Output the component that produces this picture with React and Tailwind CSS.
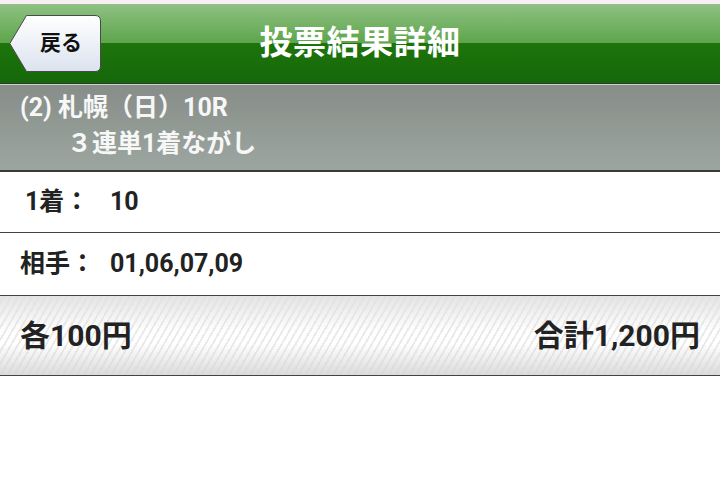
export default function App() {
  const font = "font-['Roboto','Noto_Sans_CJK_JP',sans-serif]";
  return (
    <div className={`w-[720px] h-[501px] bg-white ${font} overflow-hidden`}>
      <div className="h-[4px] bg-[#f8eff4]" />
      {/* Header */}
      <div className="relative h-[80px] bg-[linear-gradient(to_bottom,#8fc183_0%,#5ea54c_49%,#1d740b_50%,#15680a_100%)] border-b border-[#2d3b28] flex items-center justify-center">
        <button className="absolute left-[9px] top-[11px] w-[92px] h-[57px] flex items-center justify-center">
          <svg className="absolute inset-0" width="92" height="57" viewBox="0 0 92 57">
            <defs>
              <linearGradient id="bk" x1="0" y1="0" x2="0" y2="1">
                <stop offset="0" stopColor="#ffffff" />
                <stop offset="1" stopColor="#dbe3ee" />
              </linearGradient>
            </defs>
            <path d="M0.8,28.5 L17.5,0.5 H86 Q91.5,0.5 91.5,6 V51 Q91.5,56.5 86,56.5 H17.5 Z" fill="url(#bk)" stroke="#4a4a4a" strokeWidth="1" />
          </svg>
          <span className="relative pl-[12px] text-[21px] font-bold text-[#111] leading-none">戻る</span>
        </button>
        <h1 className="text-[33px] font-bold text-white leading-none tracking-[0.5px] mt-[-2px]">投票結果詳細</h1>
      </div>
      {/* Race info */}
      <div className="h-[88px] border-t border-[#c9d2cb] bg-[linear-gradient(to_bottom,#878d88,#9ca6a0)] border-b-2 border-b-[#3a3a3a] pl-[20px] pt-[5px] text-[25px] text-[#f7f7f7] font-bold leading-[36px]">
        <div>(2) 札幌（日）10R</div>
        <div className="pl-[47px]">３連単1着ながし</div>
      </div>
      {/* Rows */}
      <div className="h-[61px] border-b border-[#444] flex items-center text-[25px] font-bold text-[#222]">
        <span className="w-[110px] pl-[25px]">1着：</span>
        <span>10</span>
      </div>
      <div className="h-[63px] border-b border-[#444] flex items-center text-[25px] font-bold text-[#222]">
        <span className="w-[110px] pl-[20px]">相手：</span>
        <span>01,06,07,09</span>
      </div>
      <div className="h-[80px] border-b border-[#444] flex items-center justify-between px-[20px] text-[30px] font-bold text-[#222] bg-[linear-gradient(to_bottom,rgba(225,225,225,0.9),rgba(255,255,255,0.2)_45%,rgba(255,255,255,0.2)_60%,rgba(215,215,215,0.9)),repeating-linear-gradient(-60deg,#ffffff_0px,#ffffff_4px,#e6e6e6_4px,#e6e6e6_6px)]">
        <span>各100円</span>
        <span>合計1,200円</span>
      </div>
    </div>
  );
}
